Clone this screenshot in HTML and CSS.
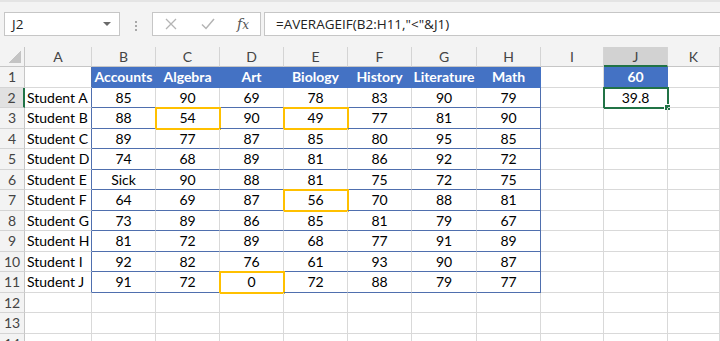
FILE: index.html
```html
<!DOCTYPE html>
<html>

<head>
  <meta charset="utf-8">
  <link rel="stylesheet" href="styles.css">
</head>

<body>

<div class="formula-bar">
  <div class="name-box">
    <span class="name-box-text">J2</span>
    <span class="name-box-arrow"></span>
  </div>
  <div class="grip"></div>
  <div class="fx-box">
    <svg class="fx-icon" width="12" height="12" viewBox="0 0 12 12">
      <path d="M1 1 L11 11 M11 1 L1 11" stroke="#b4b4b4" stroke-width="1.3" fill="none"/>
    </svg>
    <svg class="fx-icon" width="14" height="12" viewBox="0 0 14 12">
      <path d="M1 6.5 L5 10.5 L13 1" stroke="#b4b4b4" stroke-width="1.5" fill="none"/>
    </svg>
    <span class="fx-label">f<span class="fx-x">x</span></span>
  </div>
  <div class="formula-input">=AVERAGEIF(B2:H11,"&lt;"&amp;J1)</div>
</div>

<div class="sheet">
  <!-- column headers -->
  <div class="cell corner"></div>
  <div class="cell col-hdr">A</div>
  <div class="cell col-hdr">B</div>
  <div class="cell col-hdr">C</div>
  <div class="cell col-hdr">D</div>
  <div class="cell col-hdr">E</div>
  <div class="cell col-hdr">F</div>
  <div class="cell col-hdr">G</div>
  <div class="cell col-hdr">H</div>
  <div class="cell col-hdr">I</div>
  <div class="cell col-hdr is-active">J</div>
  <div class="cell col-hdr">K</div>

  <!-- row 1 -->
  <div class="cell row-hdr">1</div>
  <div class="cell edge-left"></div>
  <div class="cell head">Accounts</div>
  <div class="cell head">Algebra</div>
  <div class="cell head">Art</div>
  <div class="cell head">Biology</div>
  <div class="cell head">History</div>
  <div class="cell head">Literature</div>
  <div class="cell head">Math</div>
  <div class="cell"></div>
  <div class="cell head">60</div>
  <div class="cell"></div>

  <!-- row 2 -->
  <div class="cell row-hdr is-active">2</div>
  <div class="cell name edge-left">Student A</div>
  <div class="cell body">85</div>
  <div class="cell body">90</div>
  <div class="cell body">69</div>
  <div class="cell body">78</div>
  <div class="cell body">83</div>
  <div class="cell body">90</div>
  <div class="cell body edge-right">79</div>
  <div class="cell"></div>
  <div class="cell num selected">39.8</div>
  <div class="cell"></div>

  <!-- row 3 -->
  <div class="cell row-hdr">3</div>
  <div class="cell name edge-left">Student B</div>
  <div class="cell body">88</div>
  <div class="cell body flagged">54</div>
  <div class="cell body">90</div>
  <div class="cell body flagged">49</div>
  <div class="cell body">77</div>
  <div class="cell body">81</div>
  <div class="cell body edge-right">90</div>
  <div class="cell"></div>
  <div class="cell"></div>
  <div class="cell"></div>

  <!-- row 4 -->
  <div class="cell row-hdr">4</div>
  <div class="cell name edge-left">Student C</div>
  <div class="cell body">89</div>
  <div class="cell body">77</div>
  <div class="cell body">87</div>
  <div class="cell body">85</div>
  <div class="cell body">80</div>
  <div class="cell body">95</div>
  <div class="cell body edge-right">85</div>
  <div class="cell"></div>
  <div class="cell"></div>
  <div class="cell"></div>

  <!-- row 5 -->
  <div class="cell row-hdr">5</div>
  <div class="cell name edge-left">Student D</div>
  <div class="cell body">74</div>
  <div class="cell body">68</div>
  <div class="cell body">89</div>
  <div class="cell body">81</div>
  <div class="cell body">86</div>
  <div class="cell body">92</div>
  <div class="cell body edge-right">72</div>
  <div class="cell"></div>
  <div class="cell"></div>
  <div class="cell"></div>

  <!-- row 6 -->
  <div class="cell row-hdr">6</div>
  <div class="cell name edge-left">Student E</div>
  <div class="cell body">Sick</div>
  <div class="cell body">90</div>
  <div class="cell body">88</div>
  <div class="cell body">81</div>
  <div class="cell body">75</div>
  <div class="cell body">72</div>
  <div class="cell body edge-right">75</div>
  <div class="cell"></div>
  <div class="cell"></div>
  <div class="cell"></div>

  <!-- row 7 -->
  <div class="cell row-hdr">7</div>
  <div class="cell name edge-left">Student F</div>
  <div class="cell body">64</div>
  <div class="cell body">69</div>
  <div class="cell body">87</div>
  <div class="cell body flagged">56</div>
  <div class="cell body">70</div>
  <div class="cell body">88</div>
  <div class="cell body edge-right">81</div>
  <div class="cell"></div>
  <div class="cell"></div>
  <div class="cell"></div>

  <!-- row 8 -->
  <div class="cell row-hdr">8</div>
  <div class="cell name edge-left">Student G</div>
  <div class="cell body">73</div>
  <div class="cell body">89</div>
  <div class="cell body">86</div>
  <div class="cell body">85</div>
  <div class="cell body">81</div>
  <div class="cell body">79</div>
  <div class="cell body edge-right">67</div>
  <div class="cell"></div>
  <div class="cell"></div>
  <div class="cell"></div>

  <!-- row 9 -->
  <div class="cell row-hdr">9</div>
  <div class="cell name edge-left">Student H</div>
  <div class="cell body">81</div>
  <div class="cell body">72</div>
  <div class="cell body">89</div>
  <div class="cell body">68</div>
  <div class="cell body">77</div>
  <div class="cell body">91</div>
  <div class="cell body edge-right">89</div>
  <div class="cell"></div>
  <div class="cell"></div>
  <div class="cell"></div>

  <!-- row 10 -->
  <div class="cell row-hdr">10</div>
  <div class="cell name edge-left">Student I</div>
  <div class="cell body">92</div>
  <div class="cell body">82</div>
  <div class="cell body">76</div>
  <div class="cell body">61</div>
  <div class="cell body">93</div>
  <div class="cell body">90</div>
  <div class="cell body edge-right">87</div>
  <div class="cell"></div>
  <div class="cell"></div>
  <div class="cell"></div>

  <!-- row 11 -->
  <div class="cell row-hdr">11</div>
  <div class="cell name edge-left">Student J</div>
  <div class="cell body">91</div>
  <div class="cell body">72</div>
  <div class="cell body flagged">0</div>
  <div class="cell body">72</div>
  <div class="cell body">88</div>
  <div class="cell body">79</div>
  <div class="cell body edge-right">77</div>
  <div class="cell"></div>
  <div class="cell"></div>
  <div class="cell"></div>

  <!-- rows 12 - 14 -->
  <div class="cell row-hdr">12</div>
  <div class="cell"></div><div class="cell"></div><div class="cell"></div><div class="cell"></div>
  <div class="cell"></div><div class="cell"></div><div class="cell"></div><div class="cell"></div>
  <div class="cell"></div><div class="cell"></div><div class="cell"></div>

  <div class="cell row-hdr">13</div>
  <div class="cell"></div><div class="cell"></div><div class="cell"></div><div class="cell"></div>
  <div class="cell"></div><div class="cell"></div><div class="cell"></div><div class="cell"></div>
  <div class="cell"></div><div class="cell"></div><div class="cell"></div>

  <div class="cell row-hdr">14</div>
  <div class="cell"></div><div class="cell"></div><div class="cell"></div><div class="cell"></div>
  <div class="cell"></div><div class="cell"></div><div class="cell"></div><div class="cell"></div>
  <div class="cell"></div><div class="cell"></div><div class="cell"></div>
</div>

</body>

</html>
```

FILE: styles.css
```css
html, body {
  margin: 0;
  padding: 0;
  background: #ffffff;
  overflow: hidden;
}

body {
  width: 720px;
  height: 341px;
  font-family: Lato, "Liberation Sans", sans-serif;
  color: #000;
}

/* formula bar */

.formula-bar {
  height: 47px;
  box-sizing: border-box;
  padding: 12px 0 0 4px;
  background: #f3f3f3;
  border-top: 2px solid #e4e4e4;
  display: flex;
  align-items: flex-start;
}

.name-box,
.fx-box,
.formula-input {
  height: 24px;
  box-sizing: border-box;
  background: #fff;
  border: 1px solid #c6c6c6;
  margin-top: -2px;
}

.name-box {
  width: 116px;
  display: flex;
  align-items: center;
  justify-content: space-between;
  padding: 0 8px 0 7px;
  font-family: "Open Sans", sans-serif;
  font-size: 13.5px;
  color: #222;
}

.name-box-arrow {
  width: 0;
  height: 0;
  border-left: 4px solid transparent;
  border-right: 4px solid transparent;
  border-top: 4px solid #6a6a6a;
}

.grip {
  width: 2px;
  height: 11px;
  margin: 6px 15px 0 15px;
  background: radial-gradient(circle, #a8a8a8 0.9px, transparent 1.1px) 0 0 / 2px 4px repeat-y;
}

.fx-box {
  width: 109px;
  display: flex;
  align-items: center;
  padding-left: 12px;
  gap: 0;
}

.fx-icon {
  margin-right: 24px;
}

.fx-box .fx-icon:nth-child(2) {
  margin-right: 22px;
}

.fx-label {
  font-family: "DejaVu Serif", "Liberation Serif", serif;
  font-style: italic;
  font-size: 14px;
  color: #555;
}

.fx-x {
  font-size: 12px;
}

.formula-input {
  flex: 1;
  margin-left: 3px;
  border-right: 0;
  padding-left: 11px;
  display: flex;
  align-items: center;
  font-family: "Open Sans", sans-serif;
  font-size: 13.5px;
  color: #222;
}

/* sheet grid */

.sheet {
  display: grid;
  grid-template-columns: 25px 67px 64px 64px 64px 64px 64px 65px 64px 63px 64px 1fr;
  grid-template-rows: 20px;
  grid-auto-rows: 20.5px;
  font-size: 14px;
}

.cell {
  box-sizing: border-box;
  border-right: 1px solid #d9d9d9;
  border-bottom: 1px solid #d9d9d9;
  display: flex;
  align-items: center;
  justify-content: center;
  white-space: nowrap;
  position: relative;
}

.corner {
  background: #f3f3f3 linear-gradient(135deg, transparent 50%, #c4c4c4 50%) no-repeat right 3px bottom 3px / 13px 13px;
  border-right: 1px solid #c6c6c6;
  border-bottom: 1px solid #c6c6c6;
}

.col-hdr {
  background: #f3f3f3;
  color: #444;
  border-right: 1px solid #d4d4d4;
  border-bottom: 1px solid #c6c6c6;
}

.row-hdr {
  background: #f3f3f3;
  color: #444;
  border-right: 1px solid #c6c6c6;
  border-bottom: 1px solid #d4d4d4;
}

.col-hdr.is-active {
  background: #d2d2d2;
  border-bottom: 2px solid #217346;
}

.row-hdr.is-active {
  background: #e1e1e1;
  border-right: 2px solid #217346;
}

/* table */

.head {
  background: #4472c4;
  color: #fff;
  font-weight: 700;
  border-right-color: #4472c4;
  border-bottom-color: #4472c4;
}

.body {
  border-bottom-color: #4f6fae;
}

.edge-left {
  border-right-color: #4f6fae;
}

.edge-right {
  border-right-color: #4f6fae;
}

.name {
  justify-content: flex-start;
  padding-left: 2px;
}

.flagged {
  outline: 2px solid #ffc000;
  outline-offset: -1px;
}

.selected {
  outline: 2px solid #217346;
  outline-offset: -1px;
}

.selected::after {
  content: "";
  position: absolute;
  right: -4px;
  bottom: -4px;
  width: 5px;
  height: 5px;
  background: #217346;
  border: 1px solid #fff;
}
```
